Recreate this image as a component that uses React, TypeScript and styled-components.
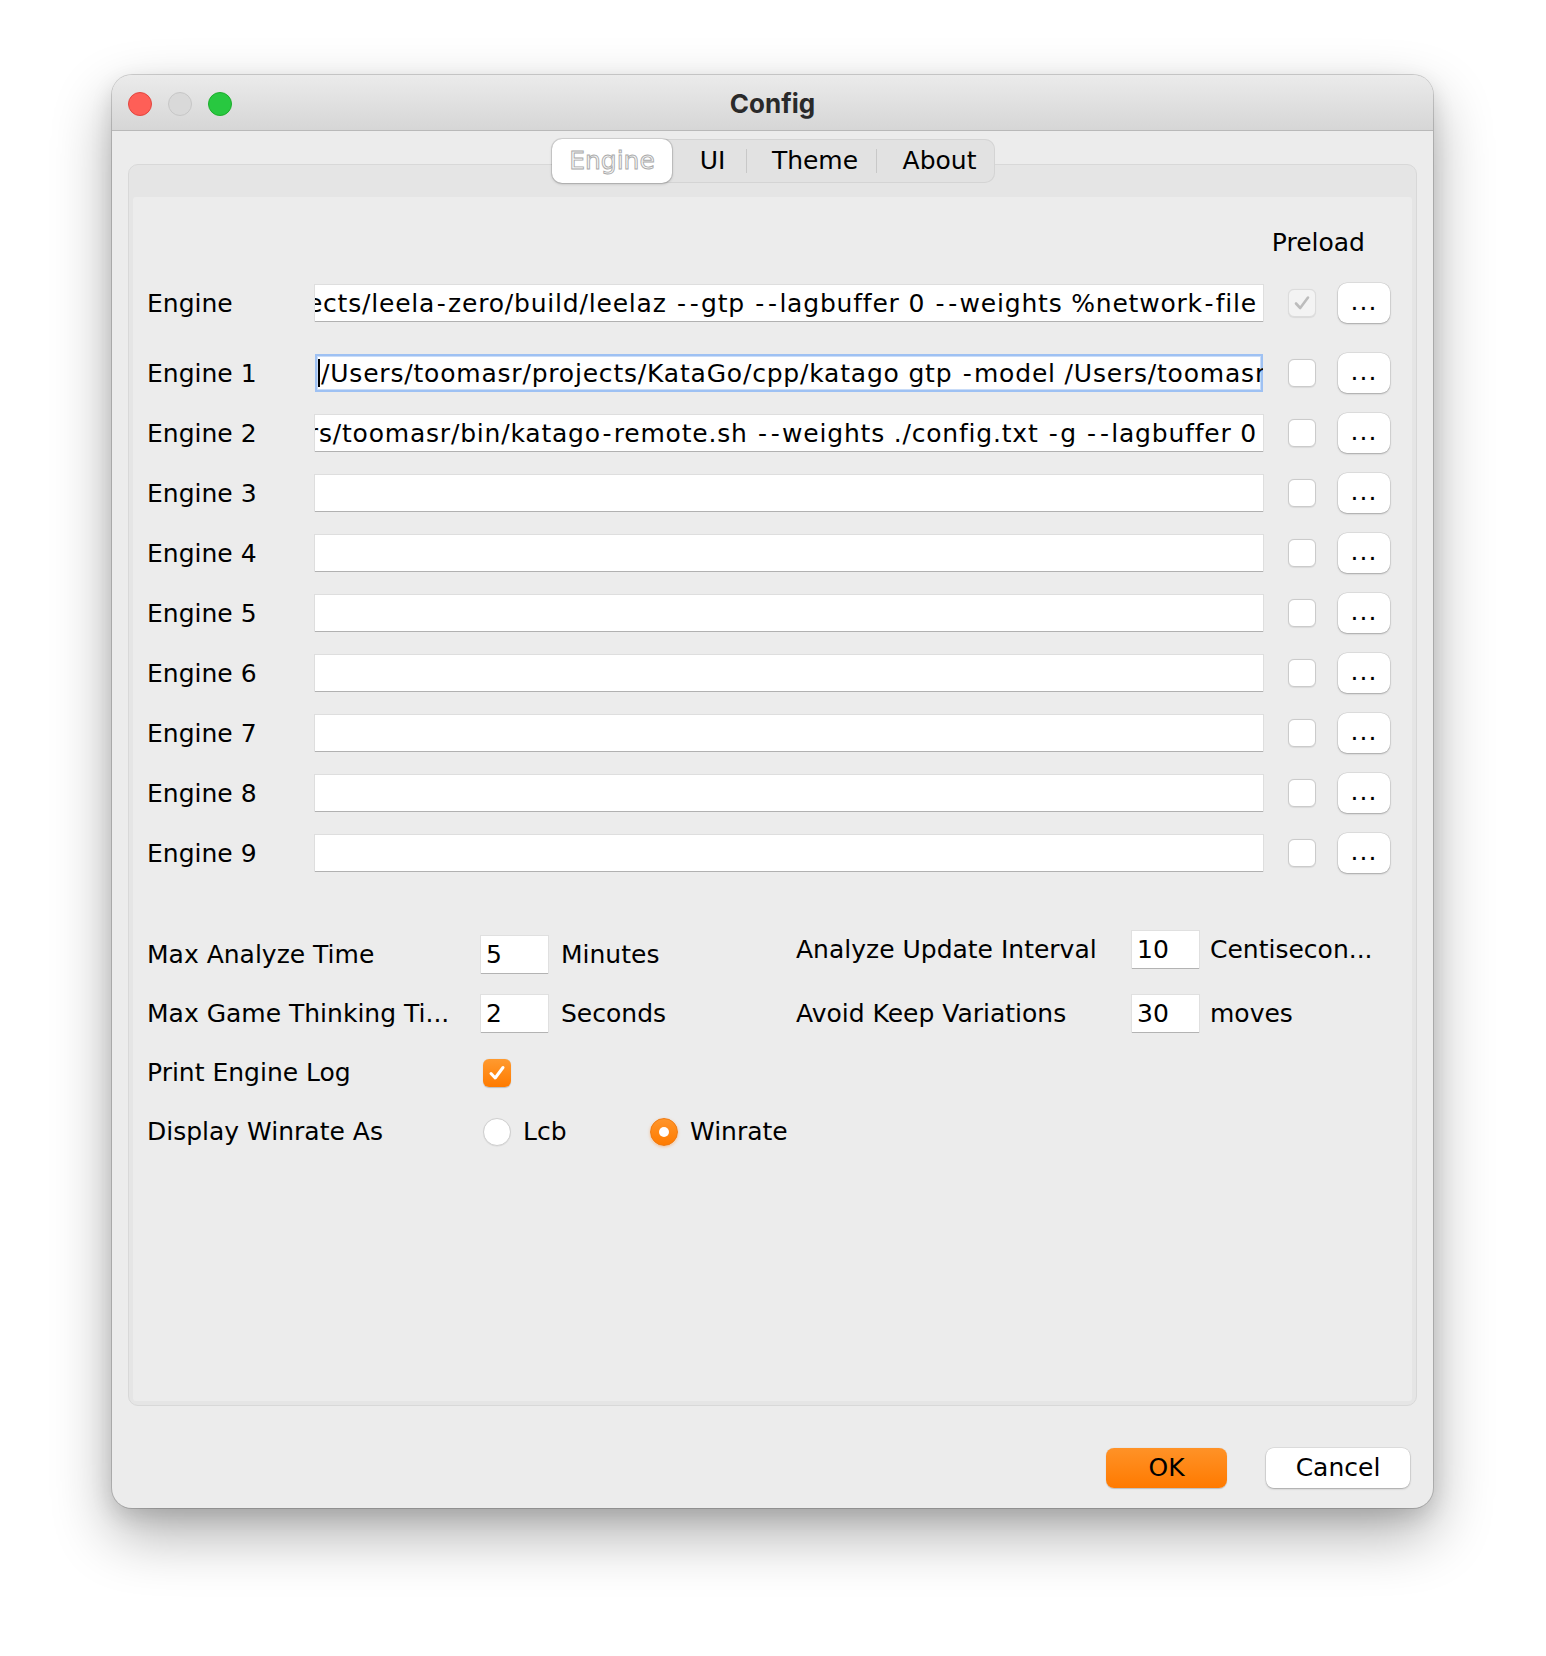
import React from "react";
import styled, { createGlobalStyle } from "styled-components";

const GlobalStyle = createGlobalStyle`
  html, body { margin: 0; padding: 0; background: #ffffff; }
  body { font-family: "DejaVu Sans", "Noto Sans", sans-serif; color: #000; }
  * { box-sizing: border-box; }
`;

const FONT = `"DejaVu Sans", "Noto Sans", sans-serif`;

const Page = styled.div`
  width: 1546px;
  height: 1656px;
  padding: 75px 0 0 112px;
  background: #ffffff;
`;

const Window = styled.div`
  width: 1321px;
  height: 1433px;
  border-radius: 20px;
  background: #ececec;
  box-shadow: 0 0 0 1px rgba(0, 0, 0, 0.16), 0 26px 60px rgba(0, 0, 0, 0.32),
    0 8px 22px rgba(0, 0, 0, 0.12);
  display: flex;
  flex-direction: column;
  overflow: hidden;
`;

const TitleBar = styled.div`
  height: 56px;
  flex-shrink: 0;
  display: grid;
  grid-template-columns: 1fr auto 1fr;
  align-items: center;
  background: linear-gradient(#ebebeb, #d6d6d6);
  border-bottom: 1px solid #b9b9b9;
`;

const Lights = styled.div`
  display: flex;
  gap: 16px;
  padding-left: 16px;
  padding-top: 2px;
`;

const Light = styled.div<{ $bg: string; $border: string }>`
  width: 24px;
  height: 24px;
  border-radius: 50%;
  background: ${(p) => p.$bg};
  border: 1px solid ${(p) => p.$border};
`;

const Title = styled.div`
  font-family: Inter, "Liberation Sans", sans-serif;
  font-weight: 700;
  font-size: 26px;
  color: #2a2a2a;
  padding-top: 2px;
`;

const Body = styled.div`
  flex: 1;
  display: flex;
  flex-direction: column;
  padding: 8px 16px 0 16px;
`;

const TabBar = styled.div`
  align-self: center;
  display: flex;
  align-items: center;
  height: 44px;
  background: #e2e2e2;
  border-radius: 10px;
  box-shadow: inset 0 0 0 1px #d4d4d4;
  position: relative;
  z-index: 1;
  margin-left: 2px;
`;

const Tab = styled.div<{ $active?: boolean; $w: number }>`
  width: ${(p) => p.$w}px;
  height: 44px;
  display: flex;
  align-items: center;
  justify-content: center;
  font-family: ${FONT};
  font-size: 25px;
  border-radius: 10px;
  color: ${(p) => (p.$active ? "#f7f7f7" : "#000")};
  background: ${(p) => (p.$active ? "#ffffff" : "transparent")};
  box-shadow: ${(p) =>
    p.$active ? "0 0 0 1px rgba(0,0,0,0.10), 0 1px 3px rgba(0,0,0,0.22)" : "none"};
  -webkit-text-stroke: ${(p) => (p.$active ? "0.9px #a9a9a9" : "0")};
  padding-bottom: 2px;
  padding-left: ${(p) => (p.$active ? 0 : 7)}px;
`;

const TabSep = styled.div`
  width: 1px;
  height: 24px;
  background: #c8c8c8;
`;

const Panel = styled.div`
  flex: 1;
  margin-top: -19px;
  border: 1px solid #d8d8d8;
  border-radius: 10px;
  background: #e5e5e5;
  padding: 32px 4px 4px 4px;
  display: flex;
  flex-direction: column;
`;

const Inner = styled.div`
  flex: 1;
  background: #ececec;
  border-radius: 3px;
  padding: 30px 0 0 14px;
  font-family: ${FONT};
  font-size: 25px;
`;

const Header = styled.div`
  width: 1243px;
  height: 30px;
  display: flex;
  align-items: center;
  justify-content: flex-end;
  padding-right: 25px;
  margin-bottom: 26px;
`;

const EngineRow = styled.div<{ $gap: number }>`
  display: flex;
  align-items: center;
  height: 40px;
  margin-bottom: ${(p) => p.$gap}px;
`;

const Label = styled.div`
  width: 168px;
  white-space: nowrap;
`;

const TextField = styled.div<{ $end?: boolean; $focused?: boolean }>`
  width: 948px;
  height: ${(p) => (p.$focused ? 38 : 36)}px;
  background: #ffffff;
  display: flex;
  align-items: center;
  justify-content: ${(p) => (p.$end ? "flex-end" : "flex-start")};
  padding: 0 6px 0 3px;
  overflow: hidden;
  white-space: nowrap;
  letter-spacing: 0.8px;
  box-shadow: ${(p) =>
    p.$focused
      ? "inset 0 0 0 2px #9ec1f3, inset 0 0 0 3px #c9dcf8"
      : "0 0 0 1px rgba(0,0,0,0.06), 0 1px 0 #bdbdbd"};
`;

const FieldText = styled.span`
  flex-shrink: 0;
`;

const Dash = styled.span`
  margin: 0 1.5px;
`;

const Caret = styled.span`
  display: inline-block;
  width: 2px;
  height: 28px;
  background: #000;
  margin-right: 1px;
  flex-shrink: 0;
`;

const CheckBox = styled.div<{ $disabled?: boolean; $ml?: number }>`
  width: 28px;
  height: 28px;
  margin-left: ${(p) => p.$ml ?? 0}px;
  border-radius: 6px;
  flex-shrink: 0;
  background: ${(p) => (p.$disabled ? "#f3f3f3" : "#ffffff")};
  border: 1px solid ${(p) => (p.$disabled ? "#dcdcdc" : "#cbcbcb")};
  box-shadow: 0 0.5px 1px rgba(0, 0, 0, 0.08);
  display: flex;
  align-items: center;
  justify-content: center;
`;

const OrangeCheck = styled.div`
  width: 28px;
  height: 28px;
  margin-left: 2px;
  border-radius: 6px;
  background: linear-gradient(#ff9a2f, #ff7b00);
  box-shadow: 0 0.5px 1px rgba(0, 0, 0, 0.2);
  display: flex;
  align-items: center;
  justify-content: center;
`;

const DotsButton = styled.div`
  width: 52px;
  height: 40px;
  margin-left: 22px;
  border-radius: 9px;
  background: #ffffff;
  box-shadow: 0 0 0 0.5px rgba(0, 0, 0, 0.12), 0 1px 2px rgba(0, 0, 0, 0.25);
  display: flex;
  align-items: center;
  justify-content: center;
  font-size: 25px;
  padding-bottom: 4px;
  letter-spacing: 1px;
`;

const Settings = styled.div`
  margin-top: 63px;
  display: grid;
  grid-template-columns: 334px 67px 248px 336px 67px auto;
  grid-auto-rows: 37px;
  row-gap: 22px;
  align-items: center;
`;

const SLabel = styled.div<{ $lift?: boolean }>`
  white-space: nowrap;
  margin-top: ${(p) => (p.$lift ? "-10px" : "0")};
`;

const SmallField = styled.div<{ $lift?: boolean }>`
  width: 67px;
  height: 37px;
  background: #ffffff;
  display: flex;
  align-items: center;
  padding-left: 5px;
  box-shadow: 0 0 0 1px rgba(0, 0, 0, 0.05), 0 1px 0 #bdbdbd;
  margin-top: ${(p) => (p.$lift ? "-10px" : "0")};
`;

const Unit = styled.div<{ $pl: number; $lift?: boolean }>`
  padding-left: ${(p) => p.$pl}px;
  white-space: nowrap;
  margin-top: ${(p) => (p.$lift ? "-10px" : "0")};
`;

const RadioGroup = styled.div`
  grid-column: 2 / 5;
  display: flex;
  align-items: center;
`;

const RadioOption = styled.div<{ $w?: number }>`
  display: flex;
  align-items: center;
  gap: 12px;
  width: ${(p) => (p.$w ? `${p.$w}px` : "auto")};
  margin-left: 2px;
`;

const Radio = styled.div<{ $on?: boolean }>`
  width: 28px;
  height: 28px;
  border-radius: 50%;
  flex-shrink: 0;
  background: ${(p) => (p.$on ? "linear-gradient(#ff952a, #ff7b00)" : "#ffffff")};
  border: 1px solid ${(p) => (p.$on ? "#f07a10" : "#cfcfcf")};
  box-shadow: ${(p) =>
    p.$on ? "0 1px 3px rgba(255,120,0,0.35)" : "0 0.5px 1px rgba(0,0,0,0.08)"};
  display: flex;
  align-items: center;
  justify-content: center;
`;

const RadioDot = styled.div`
  width: 10px;
  height: 10px;
  border-radius: 50%;
  background: #ffffff;
`;

const Footer = styled.div`
  flex-shrink: 0;
  display: flex;
  justify-content: flex-end;
  gap: 39px;
  padding: 42px 7px 20px 0;
`;

const DialogButton = styled.div<{ $primary?: boolean; $w: number }>`
  width: ${(p) => p.$w}px;
  height: 40px;
  border-radius: 8px;
  display: flex;
  align-items: center;
  justify-content: center;
  font-family: ${FONT};
  font-size: 25px;
  color: #000;
  background: ${(p) => (p.$primary ? "linear-gradient(#ff9227, #ff7a00)" : "#ffffff")};
  box-shadow: ${(p) =>
    p.$primary
      ? "0 0.5px 1px rgba(0,0,0,0.2)"
      : "0 0 0 0.5px rgba(0,0,0,0.12), 0 1px 2px rgba(0,0,0,0.25)"};
  padding-bottom: 2px;
`;

const CheckMark = ({ color, width }: { color: string; width: number }) => (
  <svg width="20" height="20" viewBox="0 0 20 20">
    <path
      d="M4 10.5 L8.2 15 L16 4.5"
      fill="none"
      stroke={color}
      strokeWidth={width}
      strokeLinecap="round"
      strokeLinejoin="round"
    />
  </svg>
);

const withDashes = (text: string) =>
  text.split("-").map((part, i) => (
    <React.Fragment key={i}>
      {i > 0 && <Dash>-</Dash>}
      {part}
    </React.Fragment>
  ));

type Engine = {
  label: string;
  text?: string;
  end?: boolean;
  focused?: boolean;
  preload?: boolean;
};

const engines: Engine[] = [
  {
    label: "Engine",
    text: "/Users/toomasr/projects/leela-zero/build/leelaz --gtp --lagbuffer 0 --weights %network-file",
    end: true,
    preload: true,
  },
  {
    label: "Engine 1",
    text: "/Users/toomasr/projects/KataGo/cpp/katago gtp -model /Users/toomasr/projects/KataGo/models/g170e-b20c256x2.bin.gz -config gtp.cfg",
    focused: true,
  },
  {
    label: "Engine 2",
    text: "/Users/toomasr/bin/katago-remote.sh --weights ./config.txt -g --lagbuffer 0",
    end: true,
  },
  { label: "Engine 3" },
  { label: "Engine 4" },
  { label: "Engine 5" },
  { label: "Engine 6" },
  { label: "Engine 7" },
  { label: "Engine 8" },
  { label: "Engine 9" },
];

export default function App() {
  return (
    <>
      <GlobalStyle />
      <Page>
        <Window>
          <TitleBar>
            <Lights>
              <Light $bg="#fe5f57" $border="#e2463f" />
              <Light $bg="#d9d9d9" $border="#c6c6c6" />
              <Light $bg="#28c840" $border="#1dad2b" />
            </Lights>
            <Title>Config</Title>
            <div />
          </TitleBar>
          <Body>
            <TabBar>
              <Tab $active $w={120}>Engine</Tab>
              <Tab $w={74}>UI</Tab>
              <TabSep />
              <Tab $w={129}>Theme</Tab>
              <TabSep />
              <Tab $w={118}>About</Tab>
            </TabBar>
            <Panel>
              <Inner>
                <Header>Preload</Header>
                {engines.map((e, i) => (
                  <EngineRow key={e.label} $gap={i === 0 ? 30 : 20}>
                    <Label>{e.label}</Label>
                    <TextField $end={e.end} $focused={e.focused}>
                      {e.focused && <Caret />}
                      {e.text && <FieldText>{withDashes(e.text)}</FieldText>}
                    </TextField>
                    <CheckBox $ml={25} $disabled={e.preload}>
                      {e.preload && <CheckMark color="#bcbcbc" width={2.6} />}
                    </CheckBox>
                    <DotsButton>...</DotsButton>
                  </EngineRow>
                ))}
                <Settings>
                  <SLabel>Max Analyze Time</SLabel>
                  <SmallField>5</SmallField>
                  <Unit $pl={13}>Minutes</Unit>
                  <SLabel $lift>Analyze Update Interval</SLabel>
                  <SmallField $lift>10</SmallField>
                  <Unit $pl={11} $lift>Centisecon...</Unit>

                  <SLabel>Max Game Thinking Ti...</SLabel>
                  <SmallField>2</SmallField>
                  <Unit $pl={13}>Seconds</Unit>
                  <SLabel>Avoid Keep Variations</SLabel>
                  <SmallField>30</SmallField>
                  <Unit $pl={11}>moves</Unit>

                  <SLabel>Print Engine Log</SLabel>
                  <OrangeCheck>
                    <CheckMark color="#ffffff" width={3} />
                  </OrangeCheck>
                  <div />
                  <div />
                  <div />
                  <div />

                  <SLabel>Display Winrate As</SLabel>
                  <RadioGroup>
                    <RadioOption $w={165}>
                      <Radio />
                      <span>Lcb</span>
                    </RadioOption>
                    <RadioOption>
                      <Radio $on>
                        <RadioDot />
                      </Radio>
                      <span>Winrate</span>
                    </RadioOption>
                  </RadioGroup>
                </Settings>
              </Inner>
            </Panel>
            <Footer>
              <DialogButton $primary $w={121}>OK</DialogButton>
              <DialogButton $w={144}>Cancel</DialogButton>
            </Footer>
          </Body>
        </Window>
      </Page>
    </>
  );
}
